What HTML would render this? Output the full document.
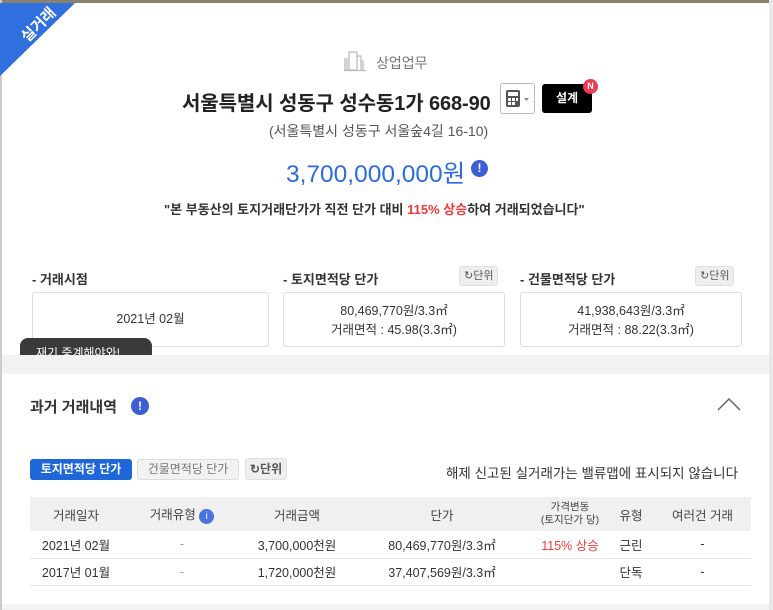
<!DOCTYPE html>
<html><head><meta charset="utf-8"><style>
*{margin:0;padding:0;box-sizing:border-box}
body{width:773px;height:610px;overflow:hidden;background:#fff;font-family:"Liberation Sans","Noto Sans CJK KR",sans-serif;color:#222;position:relative}
.a{position:absolute}
.c{text-align:center}
.box{position:absolute;border:1px solid #ddd;border-radius:3px;background:#fff;text-align:center;font-size:12.5px;color:#333}
.unit{position:absolute;background:#eee;border:1px solid #e0e0e0;border-radius:3px;font-size:11px;color:#555;height:20px;line-height:18px;padding:0 4px}
.lbl{position:absolute;font-size:13px;font-weight:bold;color:#333}
table{border-collapse:collapse;position:absolute;left:30px;top:497px;width:721px;font-size:12.5px;color:#333;table-layout:fixed}
td,th{text-align:center;font-weight:normal}
th{background:#f0f0f0;height:34px;color:#444}
td{height:27px;border-bottom:1px solid #e4e4e4}
</style></head><body>
<div class="a" style="left:0;top:0;width:773px;height:3px;background:#8a8070"></div>
<div class="a" style="left:0;top:0;width:2px;height:610px;background:#ccc"></div>
<div class="a" style="left:769px;top:0;width:4px;height:610px;background:#e8e8e8"></div>
<svg class="a" style="left:0;top:3px" width="76" height="74"><polygon points="0,0 75,0 0,73" fill="#2f6fde"/><text x="20" y="38" fill="#fff" font-size="15" font-weight="bold" transform="rotate(-45 26 30)" font-family="Liberation Sans,Noto Sans CJK KR,sans-serif">실거래</text></svg>
<svg class="a" style="left:343px;top:50px" width="24" height="22"><g fill="none" stroke="#bbb" stroke-width="1.3"><rect x="6" y="2" width="8" height="18"/><path d="M2 8v12M4 8v12M14 6h4v14M20 10v10M1 20.5h22"/></g></svg>
<div class="a" style="left:376px;top:53px;font-size:14px;color:#777">상업업무</div>
<div class="a" style="left:182px;top:87px;font-size:20px;font-weight:bold;color:#222;letter-spacing:-0.1px">서울특별시 성동구 성수동1가 668-90</div>
<div class="a" style="left:500px;top:83px;width:35px;height:31px;border:1px solid #bbb;border-radius:3px;background:#fff"></div>
<svg class="a" style="left:505px;top:89px" width="28" height="20"><rect x="1" y="1" width="14" height="17" rx="2" fill="#555"/><g fill="#fff"><rect x="3" y="3" width="10" height="4"/><rect x="3" y="9" width="3" height="3"/><rect x="7" y="9" width="3" height="3"/><rect x="11" y="9" width="2" height="3"/><rect x="3" y="13" width="3" height="3"/><rect x="7" y="13" width="3" height="3"/></g><path d="M19 9l2.5 3 2.5-3z" fill="#888"/></svg>
<div class="a c" style="left:542px;top:84px;width:50px;height:29px;background:#000;border-radius:3px;color:#fff;font-size:12px;font-weight:bold;line-height:29px">설계</div>
<div class="a c" style="left:583px;top:79px;width:15px;height:15px;background:#f03a55;border-radius:50%;color:#fff;font-size:9px;font-weight:bold;line-height:15px">N</div>
<div class="a" style="left:269px;top:121px;font-size:14px;color:#555">(서울특별시 성동구 서울숲4길 16-10)</div>
<div class="a" style="left:286px;top:155px;font-size:24.5px;color:#2d6be0">3,700,000,000원</div>
<div class="a c" style="left:471px;top:160px;width:17px;height:17px;border-radius:50%;background:#3d5fd6;color:#fff;font-size:12px;font-weight:bold;line-height:17px">!</div>
<div class="a" style="left:164px;top:199px;font-size:13px;font-weight:bold;color:#333">"본 부동산의 토지거래단가가 직전 단가 대비 <span style="color:#f03a3a">115% 상승</span>하여 거래되었습니다"</div>

<div class="lbl" style="left:32px;top:269px">- 거래시점</div>
<div class="lbl" style="left:283px;top:269px">- 토지면적당 단가</div>
<div class="lbl" style="left:520px;top:269px">- 건물면적당 단가</div>
<div class="unit" style="left:459px;top:266px">↻단위</div>
<div class="unit" style="left:695px;top:266px">↻단위</div>
<div class="box" style="left:32px;top:292px;width:237px;height:55px;line-height:53px">2021년 02월</div>
<div class="box" style="left:283px;top:292px;width:222px;height:55px;padding-top:9px;line-height:19px">80,469,770원/3.3㎡<br>거래면적 : 45.98(3.3㎡)</div>
<div class="box" style="left:520px;top:292px;width:222px;height:55px;padding-top:9px;line-height:19px">41,938,643원/3.3㎡<br>거래면적 : 88.22(3.3㎡)</div>
<div class="a" style="left:20px;top:338px;width:132px;height:30px;background:#3a3a3a;border-radius:8px;color:#fff;font-size:12px;padding:6px 16px">재기 중계해야와!</div>
<div class="a" style="left:2px;top:355px;width:767px;height:19px;background:#f2f2f2"></div>

<div class="a" style="left:30px;top:396px;font-size:15px;font-weight:bold;color:#333">과거 거래내역</div>
<div class="a c" style="left:131px;top:397px;width:18px;height:18px;border-radius:50%;background:#3d5fd6;color:#fff;font-size:12px;font-weight:bold;line-height:18px">!</div>
<svg class="a" style="left:716px;top:396px" width="26" height="16"><path d="M2 14L13 3l11 11" fill="none" stroke="#666" stroke-width="1.5"/></svg>

<div class="a c" style="left:30px;top:459px;width:102px;height:21px;background:#1f66d8;border-radius:3px;color:#fff;font-size:12px;font-weight:bold;line-height:21px">토지면적당 단가</div>
<div class="a c" style="left:137px;top:459px;width:102px;height:21px;background:#f2f2f2;border:1px solid #ddd;border-radius:3px;color:#777;font-size:12px;line-height:19px">건물면적당 단가</div>
<div class="unit" style="left:245px;top:458px;height:22px;line-height:20px;font-size:12px;font-weight:bold">↻단위</div>
<div class="a" style="left:446px;top:462px;font-size:13.5px;color:#333">해제 신고된 실거래가는 밸류맵에 표시되지 않습니다</div>

<table>
<tr><th style="width:92px">거래일자</th><th style="width:120px">거래유형 <span style="display:inline-block;width:15px;height:15px;border-radius:50%;background:#4a72e0;color:#fff;font-size:10px;line-height:15px;vertical-align:middle">i</span></th><th style="width:110px">거래금액</th><th style="width:180px">단가</th><th style="width:76px;font-size:10.5px;line-height:13px">가격변동<br>(토지단가 당)</th><th style="width:46px">유형</th><th>여러건 거래</th></tr>
<tr><td>2021년 02월</td><td style="color:#999">-</td><td>3,700,000천원</td><td>80,469,770원/3.3㎡</td><td style="color:#f03a3a">115% 상승</td><td>근린</td><td>-</td></tr>
<tr><td>2017년 01월</td><td style="color:#999">-</td><td>1,720,000천원</td><td>37,407,569원/3.3㎡</td><td></td><td>단독</td><td>-</td></tr>
</table>
<div class="a" style="left:2px;top:604px;width:767px;height:6px;background:#f2f2f2"></div>
</body></html>
